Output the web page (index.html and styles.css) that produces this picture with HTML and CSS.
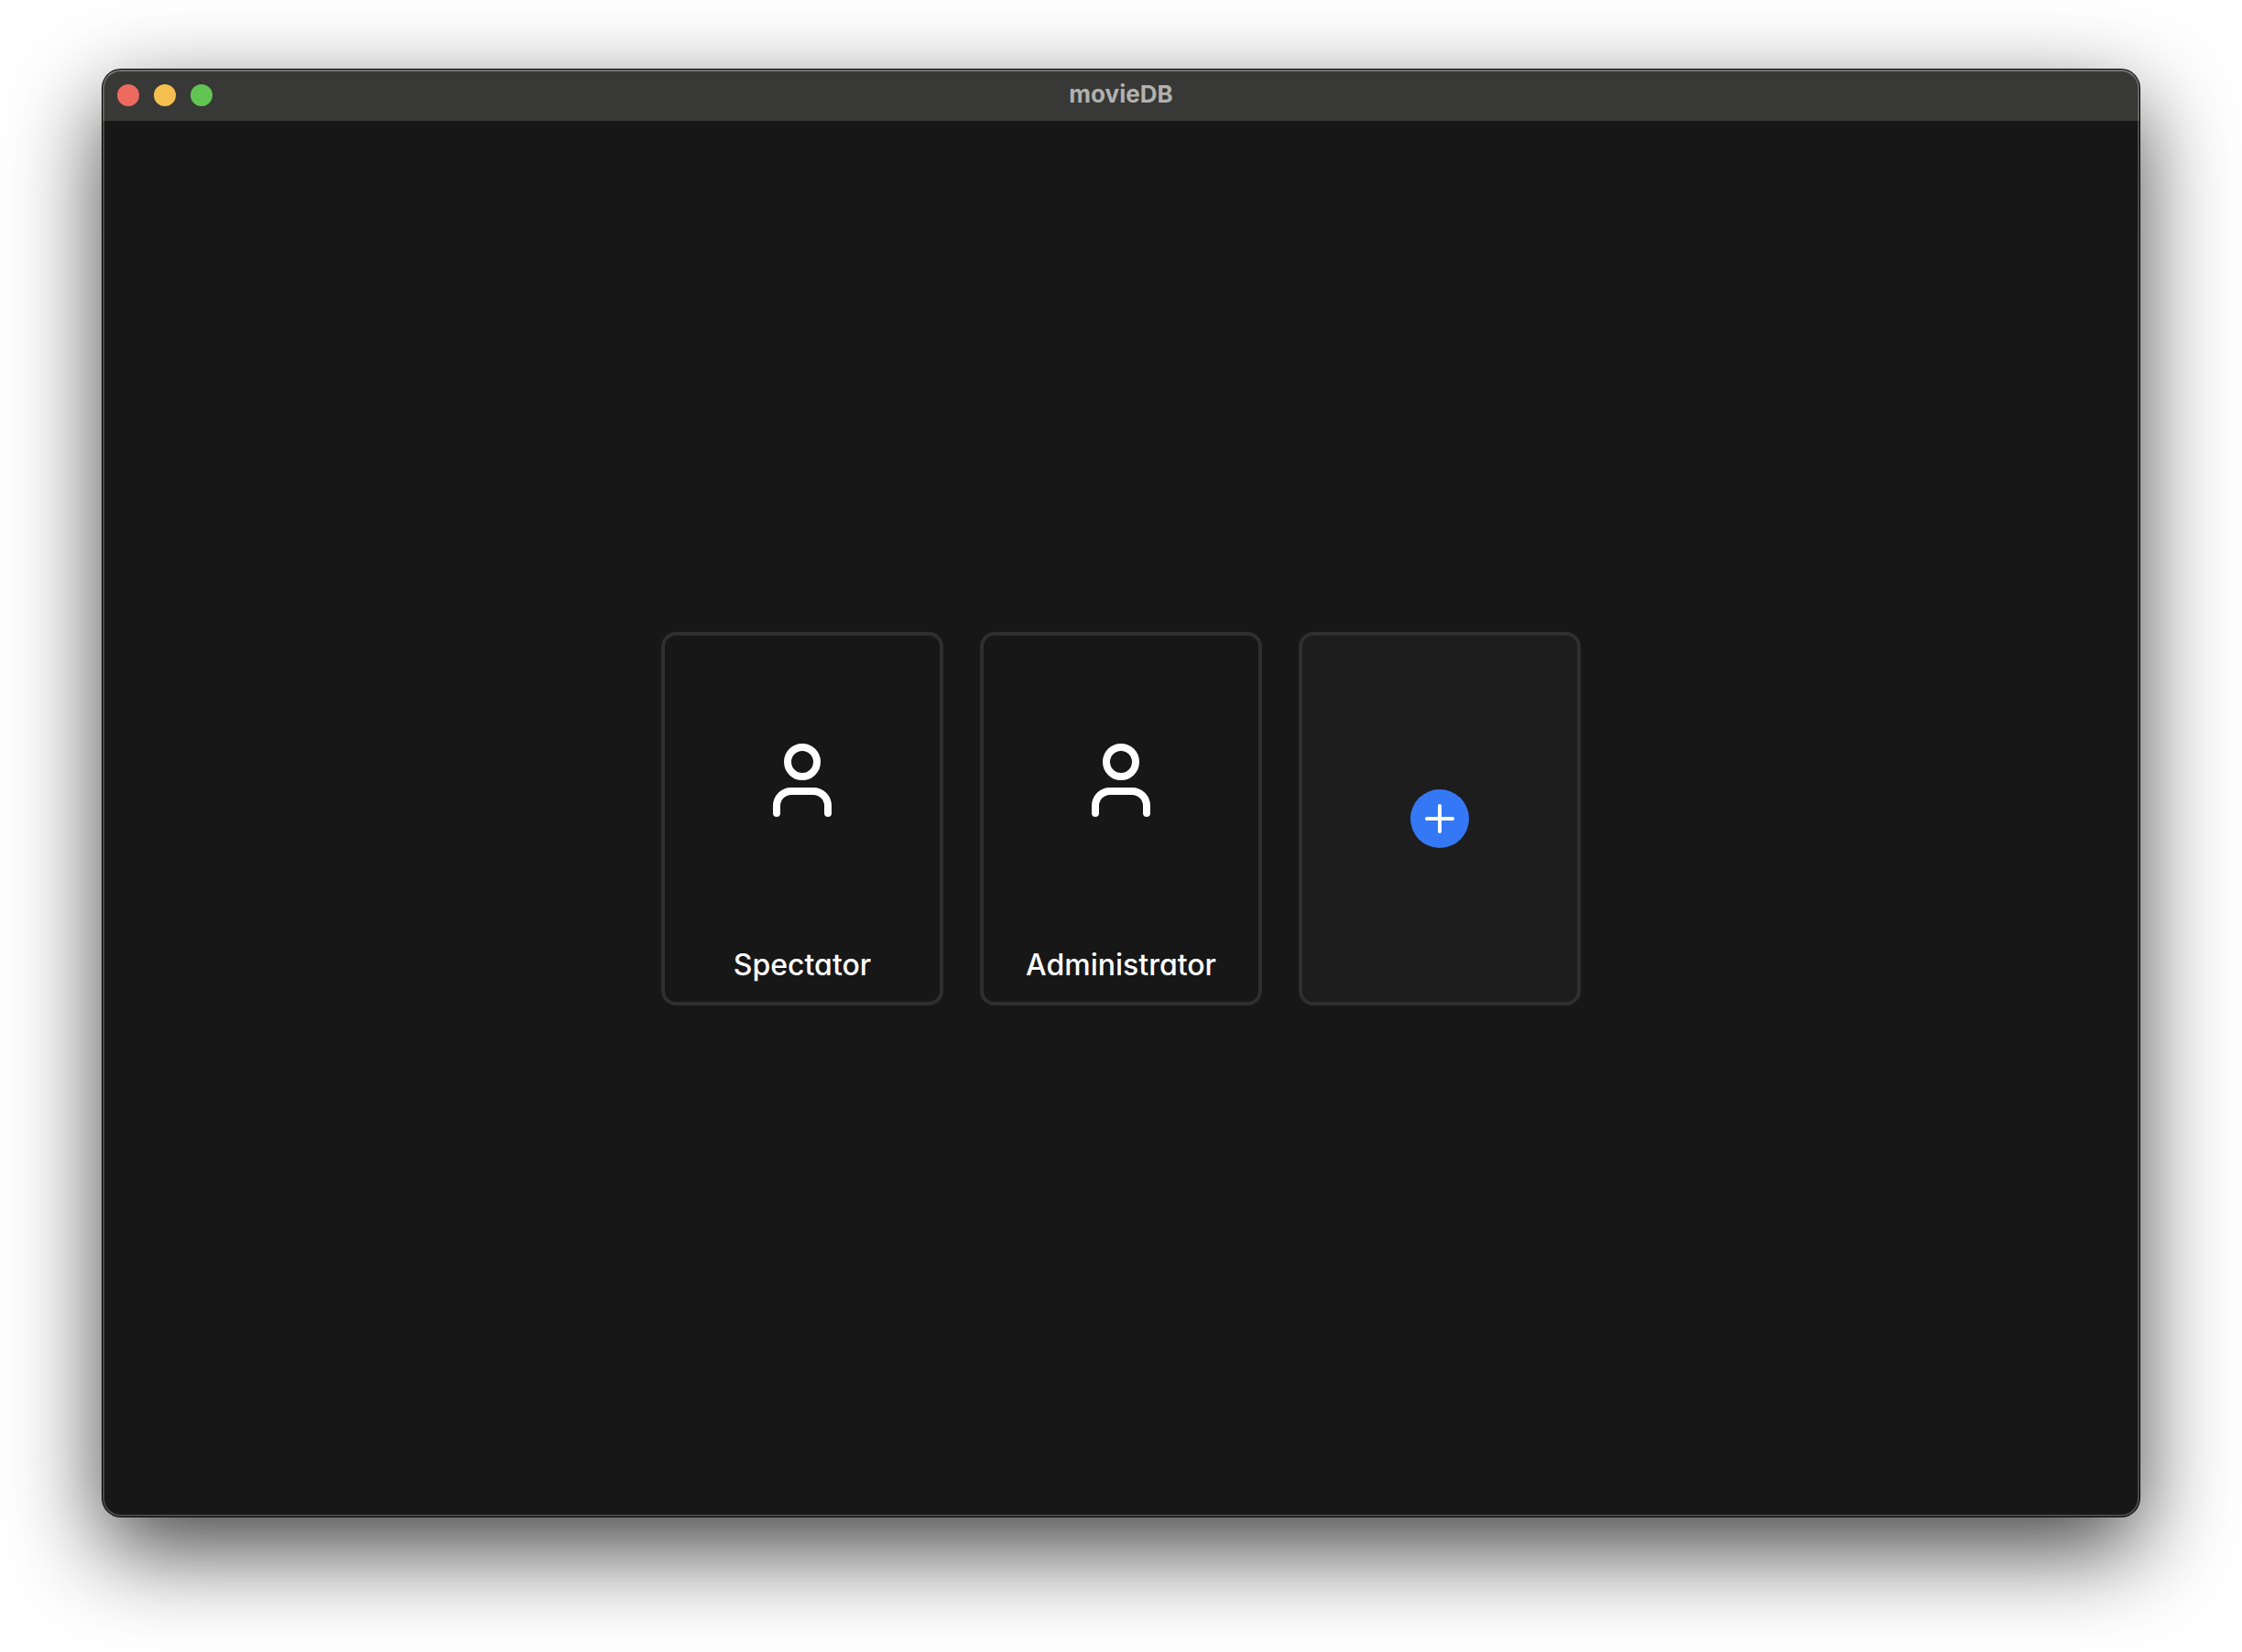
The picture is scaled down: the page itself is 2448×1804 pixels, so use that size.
FILE: index.html
```html
<!DOCTYPE html>
<html lang="en">
<head>
<meta charset="utf-8">
<title>movieDB</title>
<link rel="stylesheet" href="styles.css">
</head>
<body>
<div class="window">
  <header class="titlebar">
    <div class="controls">
      <button class="control control-close" type="button" aria-label="Close"></button>
      <button class="control control-minimize" type="button" aria-label="Minimize"></button>
      <button class="control control-zoom" type="button" aria-label="Zoom"></button>
    </div>
    <h1 class="title">movieDB</h1>
  </header>
  <main class="profiles">
    <button class="card" type="button">
      <span class="avatar">
        <svg class="icon" viewBox="0 0 24 24" fill="none" stroke="currentColor" stroke-width="2" stroke-linecap="round" aria-hidden="true">
          <circle cx="12" cy="7" r="4"/>
          <path d="M5 21v-2a4 4 0 0 1 4-4h6a4 4 0 0 1 4 4v2"/>
        </svg>
      </span>
      <span class="name">Spectator</span>
    </button>
    <button class="card" type="button">
      <span class="avatar">
        <svg class="icon" viewBox="0 0 24 24" fill="none" stroke="currentColor" stroke-width="2" stroke-linecap="round" aria-hidden="true">
          <circle cx="12" cy="7" r="4"/>
          <path d="M5 21v-2a4 4 0 0 1 4-4h6a4 4 0 0 1 4 4v2"/>
        </svg>
      </span>
      <span class="name">Administrator</span>
    </button>
    <button class="card card-add" type="button" aria-label="Add profile">
      <svg class="plus" viewBox="0 0 64 64" aria-hidden="true">
        <circle cx="32" cy="32" r="32" fill="#3478f6"/>
        <path d="M32 18v28M18 32h28" stroke="#fff" stroke-width="4" stroke-linecap="round"/>
      </svg>
    </button>
  </main>
</div>
</body>
</html>
```
FILE: styles.css
```css
* {
  box-sizing: border-box;
}

body {
  margin: 0;
  min-height: 100vh;
  display: flex;
  padding: 76px 112px 148px;
  background: #fff;
  color: #fff;
  font-family: Inter, "Liberation Sans", sans-serif;
  overflow: hidden;
}

button {
  margin: 0;
  padding: 0;
  border: 0;
  background: none;
  color: inherit;
  font: inherit;
}

.window {
  position: relative;
  flex: 1;
  display: flex;
  flex-direction: column;
  border-radius: 20px;
  background: #171717;
  box-shadow: 0 0 0 1px #000, 0 36px 100px rgba(0, 0, 0, 0.74);
}

/* Light rim drawn over the title bar and the content */
.window::after {
  content: "";
  position: absolute;
  inset: 0;
  border: 2px solid rgba(255, 255, 255, 0.22);
  border-top-color: rgba(255, 255, 255, 0.3);
  border-radius: inherit;
  pointer-events: none;
}

.titlebar {
  display: grid;
  grid-template-columns: 1fr auto 1fr;
  align-items: center;
  height: 56px;
  padding: 0 16px;
  border-radius: 20px 20px 0 0;
  background: #383836;
}

.controls {
  display: flex;
  gap: 16px;
}

.control {
  width: 24px;
  height: 24px;
  border-radius: 50%;
}

.control-close {
  background: #ed6a5e;
}

.control-minimize {
  background: #f5bf4f;
}

.control-zoom {
  background: #61c554;
}

.title {
  margin: 0;
  padding-bottom: 2px;
  color: #b1b1af;
  font-size: 26px;
  font-weight: 700;
  line-height: 32px;
}

.profiles {
  flex: 1;
  display: flex;
  flex-wrap: wrap;
  justify-content: center;
  align-content: center;
  gap: 40px;
}

.card {
  display: flex;
  flex-direction: column;
  align-items: center;
  width: 308px;
  height: 408px;
  padding-bottom: 20px;
  border: 4px solid #2f2f2f;
  border-radius: 16px;
}

.card-add {
  justify-content: center;
  padding: 0;
  background: #1d1d1d;
}

.avatar {
  flex: 1;
  display: flex;
  align-items: center;
  padding-bottom: 24px;
}

.icon {
  width: 96px;
  height: 96px;
}

.name {
  font-size: 32px;
  font-weight: 500;
  line-height: 40px;
  font-feature-settings: "cv11";
}

.plus {
  width: 64px;
  height: 64px;
}
```
